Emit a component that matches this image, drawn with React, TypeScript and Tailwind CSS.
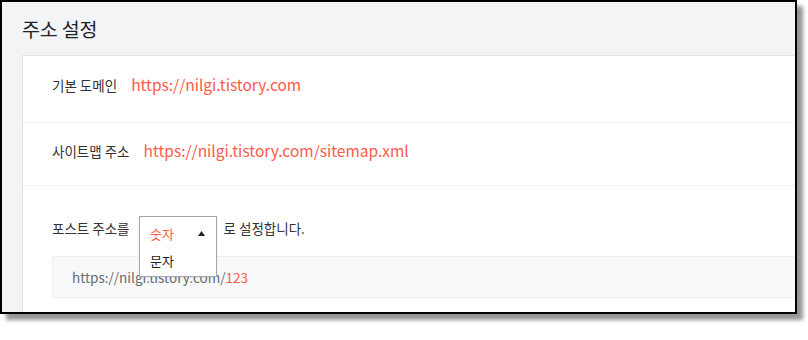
import React from "react";

const font = { fontFamily: '"Noto Sans CJK KR", "Noto Sans", sans-serif' };

export default function App() {
  return (
    <div className="w-[808px] h-[340px] bg-white" style={font}>
      <div className="w-[797px] h-[314px] border-2 border-black bg-[#f3f4f6] overflow-hidden shadow-[6px_6px_4px_rgba(0,0,0,0.42)] flex flex-col">
        <div className="h-[53px] pt-[1px] pl-[20px] flex items-center shrink-0">
          <h1 className="text-[19.5px] leading-none text-[#222] tracking-[-0.2px]">주소 설정</h1>
        </div>
        <div className="ml-[20px] w-[900px] flex-1 bg-white border-l border-t border-[#e1e4e9] flex flex-col">
          <div className="h-[67px] shrink-0 pl-[29px] pb-[8px] flex items-center border-b border-[#f0f1f3]">
            <span className="text-[13.5px] text-[#333]">기본 도메인</span>
            <span className="ml-[14px] text-[15.5px] text-[#ff5a4a]">https://nilgi.tistory.com</span>
          </div>
          <div className="h-[63px] shrink-0 pl-[29px] pb-[6px] flex items-center border-b border-[#f0f1f3]">
            <span className="text-[13.5px] text-[#333]">사이트맵 주소</span>
            <span className="ml-[14px] text-[15.5px] text-[#ff5a4a]">https://nilgi.tistory.com/sitemap.xml</span>
          </div>
          <div className="pt-[25px] pl-[29px]">
            <div className="relative h-[34px] flex items-center text-[13.5px] text-[#333]">
              <span>포스트 주소를</span>
              <span className="inline-block w-[78px] ml-[9px]" />
              <span className="ml-[7px]">로 설정합니다.</span>
              <div className="absolute z-10 left-[87px] top-[5px] w-[78px] h-[61px] bg-white border border-[#a3a7ae] shadow-[0_1px_2px_rgba(0,0,0,0.08)] flex flex-col text-[13px]">
                <div className="h-[34px] flex items-center pl-[10px] pr-[10px] justify-between">
                  <span className="text-[#ff5a4a]">숫자</span>
                  <svg width="7" height="5" viewBox="0 0 7 5" className="mr-[1px]">
                    <polygon points="3.5,0 7,5 0,5" fill="#222" />
                  </svg>
                </div>
                <div className="flex-1 flex items-center pl-[10px] pb-[6px]">
                  <span className="text-[#222]">문자</span>
                </div>
              </div>
            </div>
            <div className="mt-[11px] h-[42px] border border-[#eceef1] bg-[#f8f9fb] flex items-center pl-[19px]">
              <span className="text-[13.5px] text-[#6b6b6b]">
                https://nilgi.tistory.com/<span className="text-[#ff5a4a]">123</span>
              </span>
            </div>
          </div>
        </div>
      </div>
    </div>
  );
}
